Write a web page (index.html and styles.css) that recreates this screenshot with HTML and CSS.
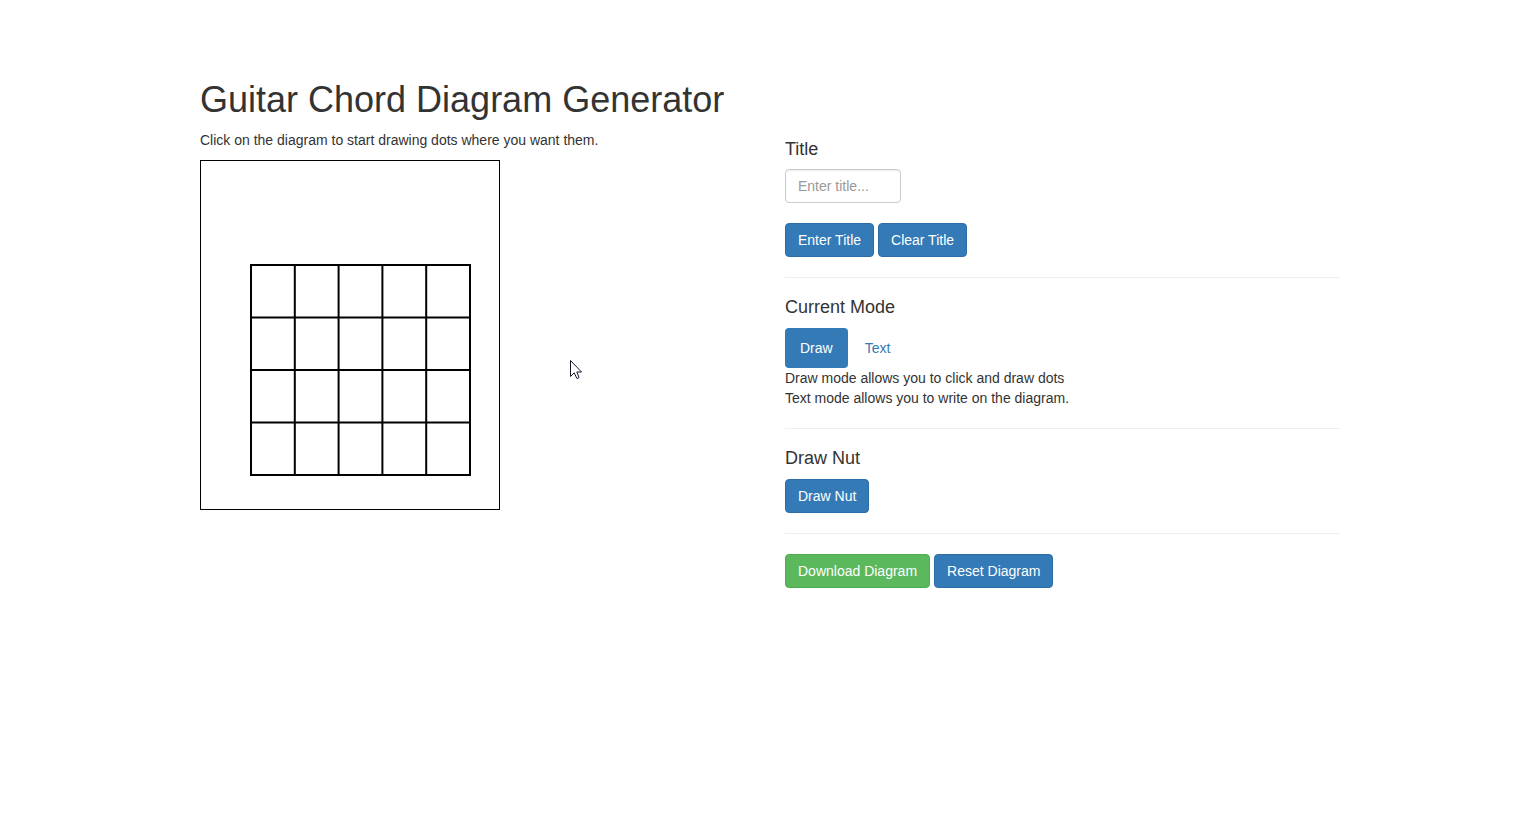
FILE: index.html
```html
<!DOCTYPE html>
<html lang="en">
<head>
<meta charset="utf-8">
<meta name="viewport" content="width=device-width, initial-scale=1">
<title>Guitar Chord Diagram Generator</title>
<link rel="stylesheet" href="styles.css">
</head>
<body>
<main class="container">
  <h1 class="page-title">Guitar Chord Diagram Generator</h1>
  <div class="row">
    <section class="column">
      <p class="intro">Click on the diagram to start drawing dots where you want them.</p>
      <svg class="diagram" width="300" height="350" viewBox="0 0 300 350" role="img" aria-label="Chord diagram">
        <rect x="0.5" y="0.5" width="299" height="349" fill="none" stroke="#000"/>
        <g fill="none" stroke="#000" stroke-width="2">
          <rect x="51" y="105" width="219" height="210"/>
          <path d="M94.8 105V315M138.6 105V315M182.4 105V315M226.2 105V315"/>
          <path d="M51 157.5H270M51 210H270M51 262.5H270"/>
        </g>
      </svg>
    </section>
    <section class="column">
      <h4 class="heading"><label for="title">Title</label></h4>
      <input class="text-input" id="title" type="text" placeholder="Enter title...">
      <div class="buttons title-buttons">
        <button class="btn btn-primary" type="button">Enter Title</button>
        <button class="btn btn-primary" type="button">Clear Title</button>
      </div>
      <hr class="divider">
      <h4 class="heading">Current Mode</h4>
      <nav class="pills">
        <a class="pill pill-active" href="#draw">Draw</a>
        <a class="pill" href="#text">Text</a>
      </nav>
      <div>Draw mode allows you to click and draw dots</div>
      <div>Text mode allows you to write on the diagram.</div>
      <hr class="divider">
      <h4 class="heading">Draw Nut</h4>
      <div class="buttons">
        <button class="btn btn-primary" type="button">Draw Nut</button>
      </div>
      <hr class="divider">
      <div class="buttons">
        <button class="btn btn-success" type="button">Download Diagram</button>
        <button class="btn btn-primary" type="button">Reset Diagram</button>
      </div>
    </section>
  </div>
</main>
<svg class="pointer" width="12" height="20" viewBox="0 0 12 20" aria-hidden="true">
  <path d="M.5 .5V16.5L4.2 12.8L6.8 18.3Q8 19 9 17.4L6.8 12H11.5Z" fill="#fff" stroke="#15152b"/>
</svg>
</body>
</html>
```
FILE: styles.css
```css
*, *::before, *::after {
  box-sizing: border-box;
}

body {
  margin: 0;
  padding: 80px 0 0 1px;
  background: #fff;
  color: #333;
  font-family: "Liberation Sans", Arial, sans-serif;
  font-size: 14px;
  line-height: 20px;
}

.container {
  max-width: 1170px;
  margin: 0 auto;
  padding: 0 15px;
}

.page-title {
  margin: 0 0 10px;
  font-size: 36px;
  font-weight: 500;
  line-height: 1.1;
}

.row {
  display: grid;
  grid-template-columns: 1fr 1fr;
  gap: 30px;
}

.intro {
  margin: 0 0 10px;
}

.diagram {
  display: block;
}

.heading {
  margin: 0 0 10px;
  font-size: 18px;
  font-weight: 500;
  line-height: 1.1;
}

.heading:first-child {
  margin-top: 10px;
}

.text-input {
  display: block;
  width: 116px;
  height: 34px;
  padding: 6px 12px;
  border: 1px solid #ccc;
  border-radius: 4px;
  background: #fff;
  box-shadow: inset 0 1px 1px rgba(0, 0, 0, 0.075);
  color: #555;
  font: inherit;
}

.text-input::placeholder {
  color: #999;
}

.buttons {
  display: flex;
  gap: 4px;
}

.title-buttons {
  margin-top: 20px;
}

.btn {
  padding: 6px 12px;
  border: 1px solid;
  border-radius: 4px;
  color: #fff;
  font: inherit;
  cursor: pointer;
}

.btn-primary {
  border-color: #2e6da4;
  background: #337ab7;
}

.btn-success {
  border-color: #4cae4c;
  background: #5cb85c;
}

.divider {
  height: 1px;
  margin: 20px 0;
  border: 0;
  background: #eee;
}

.pills {
  display: flex;
  gap: 2px;
}

.pill {
  padding: 10px 15px;
  border-radius: 4px;
  color: #337ab7;
  text-decoration: none;
}

.pill-active {
  background: #337ab7;
  color: #fff;
}

.pointer {
  position: absolute;
  top: 360px;
  left: 570px;
}

@media (max-width: 767px) {
  .row {
    grid-template-columns: 1fr;
  }
}
```
